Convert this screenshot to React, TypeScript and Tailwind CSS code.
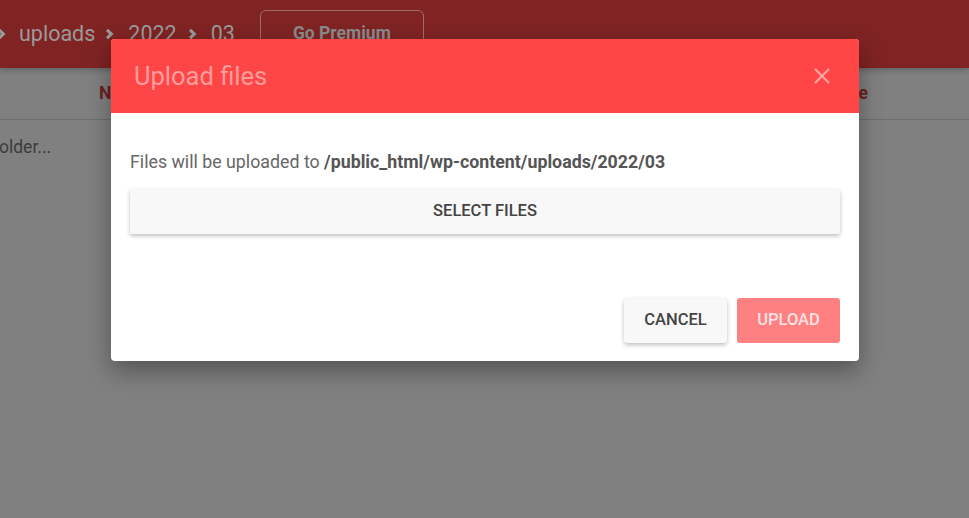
import { X } from "lucide-react"

function Chevron({ className = "" }: { className?: string }) {
  return (
    <svg viewBox="0 0 10 12" className={`h-[12px] w-[9px] shrink-0 ${className}`}>
      <path d="M2.2 1.5 L7 6 L2.2 10.5" fill="none" stroke="currentColor" strokeWidth="3.4" />
    </svg>
  )
}

export default function App() {
  return (
    <div className="relative h-[518px] w-full overflow-hidden bg-[#808080] font-['Roboto',sans-serif]">
      {/* dimmed page behind the dialog */}
      <header className="flex h-[68px] items-center bg-[#7f2323] shadow-[0_2px_6px_rgba(0,0,0,0.25)]">
        <nav className="-ml-[3px] flex items-center text-[21.5px] text-[#9a9a9a]">
          <Chevron />
          <span className="ml-[13px]">uploads</span>
          <Chevron className="ml-[10px]" />
          <span className="ml-[14px]">2022</span>
          <Chevron className="ml-[11px]" />
          <span className="ml-[14px]">03</span>
        </nav>
        <button className="ml-[25px] h-[46px] w-[164px] -translate-y-[1px] rounded-[6px] border border-[#a26a6a] text-[17.5px] font-bold text-[#8a8a8a]">
          Go Premium
        </button>
      </header>
      <div className="flex h-[52px] items-center justify-between border-b border-[#6e6e6e] pl-[99px] pr-[101px] text-[17.5px] font-bold text-[#6b2020]">
        <span>Name</span>
        <span>Date</span>
      </div>
      <p className="mt-[14px] -ml-[1px] text-[17.5px] text-[#3c3c3c]">older...</p>

      {/* dialog */}
      <div className="absolute left-[111px] top-[39px] w-[748px] overflow-hidden rounded-[4px] bg-white shadow-[0_10px_24px_rgba(0,0,0,0.35)]">
        <div className="flex h-[74px] items-center justify-between bg-[#ff4646] pl-[23px] pr-[24px]">
          <h2 className="text-[25.5px] text-[#ff9d9d]">Upload files</h2>
          <X className="h-[26px] w-[26px] text-[#ffa3a3]" strokeWidth={2} />
        </div>
        <div className="px-[19px] pb-[18px] pt-[36px]">
          <p className="text-[17.8px] text-[#666666]">
            Files will be uploaded to <span className="font-bold text-[#555555]">/public_html/wp-content/uploads/2022/03</span>
          </p>
          <button className="mt-[13px] h-[45px] w-full rounded-[2px] bg-[#f8f8f8] text-[16.5px] font-medium uppercase text-[#444444] shadow-[0_2px_4px_rgba(0,0,0,0.25)]">
            Select files
          </button>
          <div className="mt-[64px] flex justify-end gap-[10px]">
            <button className="h-[45px] w-[103px] rounded-[3px] bg-[#f8f8f8] text-[16.5px] font-medium text-[#444444] shadow-[0_2px_4px_rgba(0,0,0,0.25)]">
              CANCEL
            </button>
            <button className="h-[45px] w-[103px] rounded-[3px] bg-[#ff8080] text-[16.5px] font-medium text-[#ffe3e3]">
              UPLOAD
            </button>
          </div>
        </div>
      </div>
    </div>
  )
}
